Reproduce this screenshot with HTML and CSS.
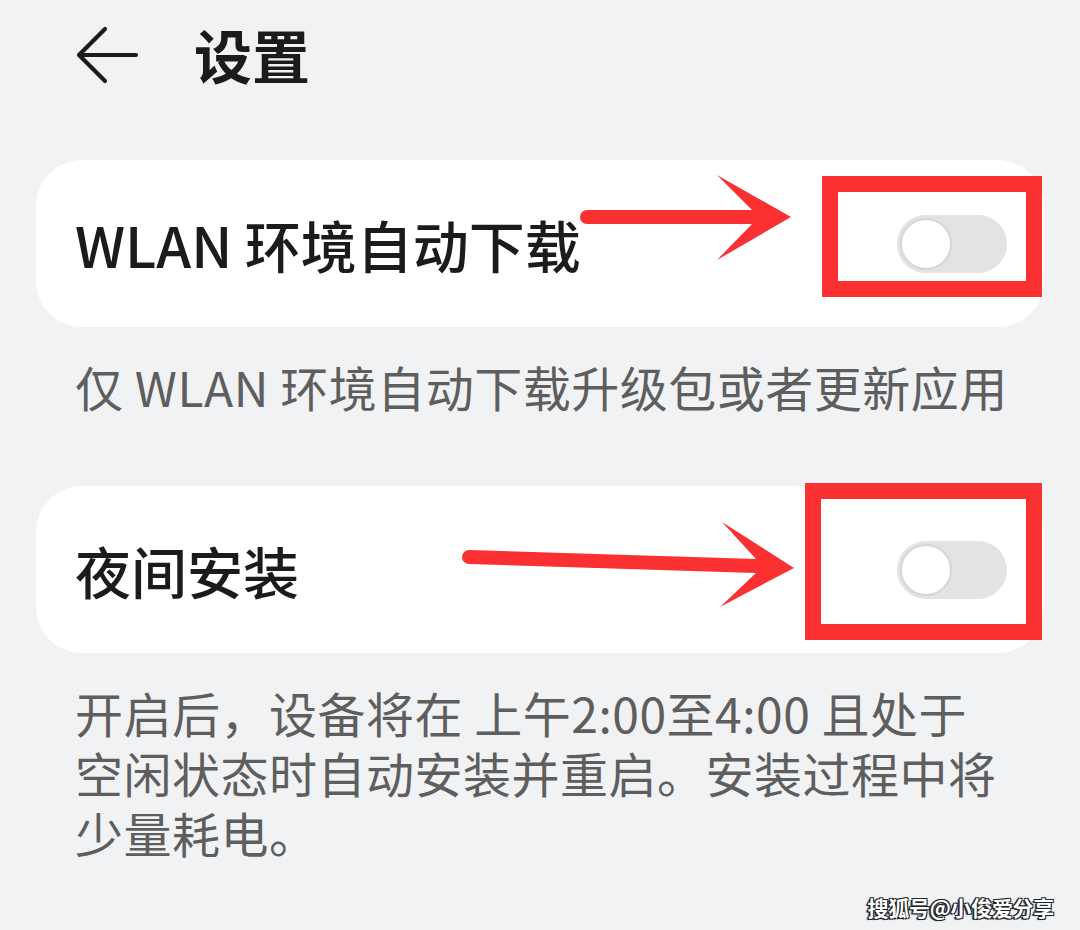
FILE: index.html
```html
<!DOCTYPE html>
<html lang="zh-CN">
<head>
<meta charset="utf-8">
<link rel="stylesheet" href="styles.css">
</head>
<body>
<div class="screen">
  <header class="header">
    <svg class="back" width="64" height="60" viewBox="0 0 64 60">
      <path d="M29 4 L3 30 L29 56 M3 30 H60" fill="none" stroke="#1b1b1b" stroke-width="4.2" stroke-linecap="round" stroke-linejoin="round"/>
    </svg>
    <h1 class="title">设置</h1>
  </header>

  <main class="content">
    <section class="card">
      <span class="card-title">WLAN 环境自动下载</span>
      <span class="switch"><span class="knob"></span></span>
    </section>
    <p class="hint">仅 WLAN 环境自动下载升级包或者更新应用</p>

    <section class="card card-second">
      <span class="card-title">夜间安装</span>
      <span class="switch"><span class="knob"></span></span>
    </section>
    <p class="hint">开启后，设备将在 上午2:00至4:00 且处于<br>空闲状态时自动安装并重启。安装过程中将<br>少量耗电。</p>
  </main>

  <svg class="annotations" width="1080" height="930" viewBox="0 0 1080 930">
    <g fill="#fb3131">
      <line x1="587" y1="217" x2="754" y2="217" stroke="#fb3131" stroke-width="14" stroke-linecap="round"/>
      <polygon points="791,217 717,175 752,210 752,224 717,260"/>
      <line x1="469" y1="557" x2="756" y2="566" stroke="#fb3131" stroke-width="14" stroke-linecap="round"/>
      <polygon points="794,568 722,522 756,559 756,573 720,607"/>
    </g>
    <g fill="none" stroke="#fb3131" stroke-width="16">
      <rect x="830" y="184" width="204" height="105"/>
      <rect x="813" y="491" width="221" height="141"/>
    </g>
  </svg>

  <div class="watermark">搜狐号@小俊爱分享</div>
</div>
</body>
</html>
```

FILE: styles.css
```css
html, body {
  margin: 0;
  padding: 0;
  background: #f1f2f4;
}

body {
  font-family: "Noto Sans CJK SC", "Noto Sans", sans-serif;
  color: #1b1b1b;
}

.screen {
  position: relative;
  width: 1080px;
  height: 930px;
  overflow: hidden;
}

.header {
  height: 108px;
  display: flex;
  align-items: center;
  padding-left: 76px;
  gap: 54px;
}

.back {
  display: block;
  margin-top: 2px;
}

.title {
  margin: 0;
  font-size: 58px;
  font-weight: 700;
  line-height: 1;
  color: #1b1b1b;
}

.content {
  padding: 52px 36px 0;
}

.card {
  height: 167px;
  box-sizing: border-box;
  background: #ffffff;
  border-radius: 46px;
  display: flex;
  align-items: center;
  justify-content: space-between;
  padding: 0 37px 0 39px;
}

.card-second {
  margin-top: 70px;
}

.card-title {
  font-size: 56px;
  font-weight: 500;
  color: #1b1b1b;
  line-height: 1;
}

.switch {
  width: 110px;
  height: 58px;
  border-radius: 29px;
  background: #e3e3e3;
  display: flex;
  align-items: center;
  padding-left: 3px;
  box-sizing: border-box;
}

.knob {
  width: 52px;
  height: 52px;
  box-sizing: border-box;
  border-radius: 50%;
  background: #ffffff;
  border: 2px solid #d6d6d6;
}

.hint {
  margin: 0;
  padding: 29px 39px 0;
  font-size: 48px;
  line-height: 60px;
  letter-spacing: 0.5px;
  color: #5e5e5e;
  white-space: nowrap;
}

.annotations {
  position: absolute;
  left: 0;
  top: 0;
  pointer-events: none;
}

.watermark {
  position: absolute;
  right: 26px;
  bottom: 12px;
  font-size: 21px;
  font-weight: 700;
  line-height: 1;
  color: #ffffff;
  letter-spacing: -0.3px;
  text-shadow: -1px 1px 0 #222, 1px 1px 0 #222, -1px -1px 0 #222, 1px -1px 0 #222, -2px 1px 1px #333;
}
```
